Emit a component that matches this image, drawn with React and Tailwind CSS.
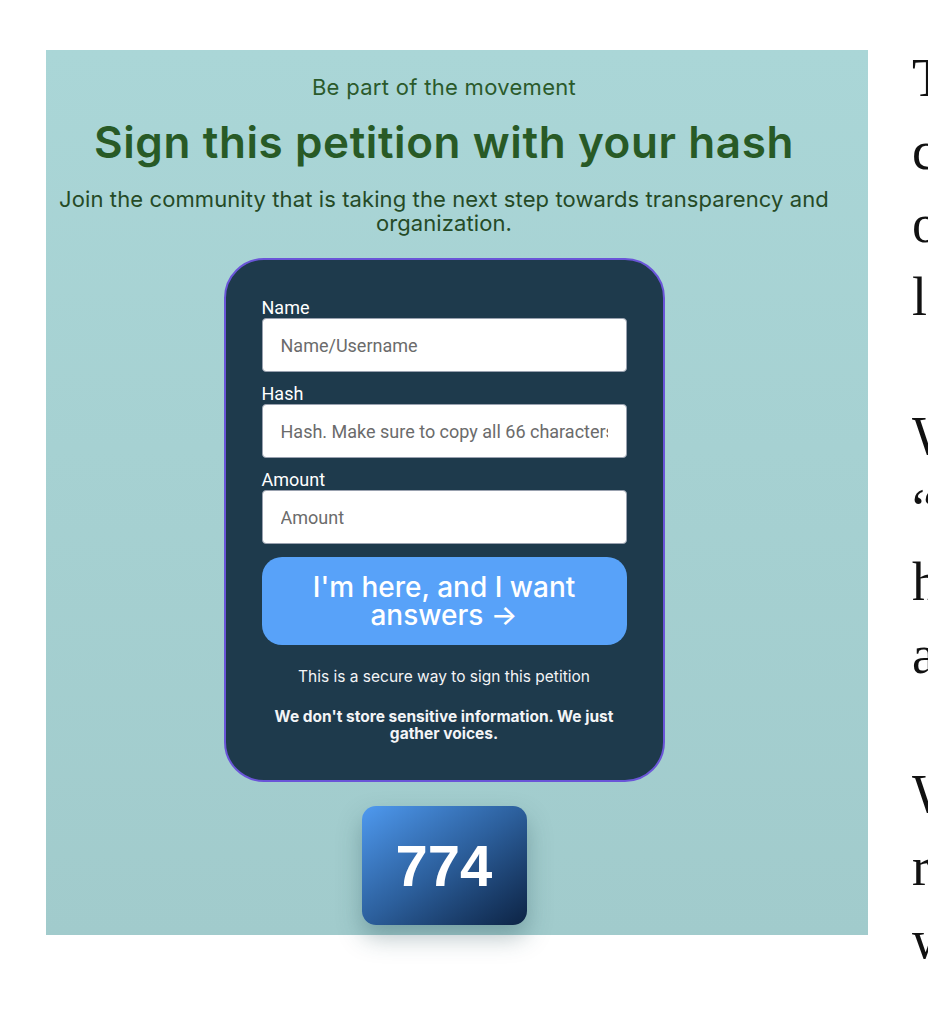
const PARAGRAPHS = [
  [
    "The petition is the first step towards",
    "collective accountability. It gives us",
    "one voice instead of many scattered",
    "letters that nobody ever answers.",
  ],
  [
    "When you sign, you are saying",
    "“we were here, and we noticed.” Your",
    "hash is proof of participation, not",
    "a way to identify you personally.",
  ],
  [
    "We will publish every update as it",
    "reaches us, so that everyone can follow",
    "what happens next.",
  ],
];

function Field({ label, placeholder }) {
  return (
    <div className="flex flex-col">
      <label className="font-[family-name:Roboto,'Liberation_Sans',sans-serif] text-[18px] leading-[21px] text-white">
        {label}
      </label>
      <input
        placeholder={placeholder}
        className="h-[54px] w-full rounded-[4px] border border-gray-400 bg-white px-[18px] font-[family-name:Roboto,'Liberation_Sans',sans-serif] text-[18px] text-gray-800 outline-none placeholder:text-[#6b6b6b]"
      />
    </div>
  );
}

export default function App() {
  return (
    <div className="flex h-[1024px] w-[928px] overflow-hidden bg-white">
      {/* Petition panel */}
      <div className="ml-[46px] mt-[50px] flex h-[885px] w-[822px] shrink-0 flex-col items-center bg-gradient-to-b from-[#aad6d7] to-[#a1cbcc] pr-[26px] font-[family-name:Inter,'Noto_Sans',sans-serif]">
        <p className="mt-[24px] text-[22px] leading-[26px] tracking-[0.3px] text-[#2b5a2b]">
          Be part of the movement
        </p>
        <h1 className="mt-[18px] text-[44px] font-semibold leading-[48px] tracking-[0.6px] text-[#285a26]">
          Sign this petition with your hash
        </h1>
        <p className="mt-[21px] text-center text-[22px] leading-[24px] tracking-[0.1px] text-[#254a26]">
          Join the community that is taking the next step towards transparency and organization.
        </p>

        {/* Form card */}
        <div className="mt-[23px] flex w-[441px] flex-col rounded-[40px] border-2 border-[#6a55d8] bg-[#1e3a4c] px-[36px] pt-[37px] pb-[38px]">
          <div className="flex flex-col gap-[11px]">
            <Field label="Name" placeholder="Name/Username" />
            <Field label="Hash" placeholder="Hash. Make sure to copy all 66 characters" />
            <Field label="Amount" placeholder="Amount" />
          </div>
          <button className="mt-[13px] h-[88px] w-full rounded-[20px] bg-[#58a2f9] px-6 text-[28px] font-medium leading-[28px] text-white">
            I'm here, and I want answers →
          </button>
          <p className="mt-[22px] text-center text-[15.5px] leading-[20px] text-gray-100">
            This is a secure way to sign this petition
          </p>
          <p className="mt-[21px] px-1 text-center text-[15.5px] font-bold leading-[17px] text-gray-100">
            We don't store sensitive information. We just gather voices.
          </p>
        </div>

        {/* Counter */}
        <div className="mt-[24px] flex h-[119px] w-[165px] items-center justify-center rounded-[14px] bg-gradient-to-br from-[#4f9af0] via-[#2c5f9c] to-[#0d2445] shadow-[0_12px_24px_rgba(40,80,90,0.35)]">
          <span className="font-[family-name:'Liberation_Sans',Arial,sans-serif] text-[58px] font-bold text-white">
            774
          </span>
        </div>
      </div>

      {/* Article text, clipped at the window edge */}
      <div className="ml-[44px] mt-[42px] flex shrink-0 flex-col gap-[66px] font-[family-name:'Liberation_Serif','DejaVu_Serif',serif]">
        {PARAGRAPHS.map((lines, i) => (
          <div key={i} className="flex flex-col">
            {lines.map((line) => (
              <p key={line} className="whitespace-nowrap text-[54px] leading-[73px] text-[#111]">
                {line}
              </p>
            ))}
          </div>
        ))}
      </div>
    </div>
  );
}
